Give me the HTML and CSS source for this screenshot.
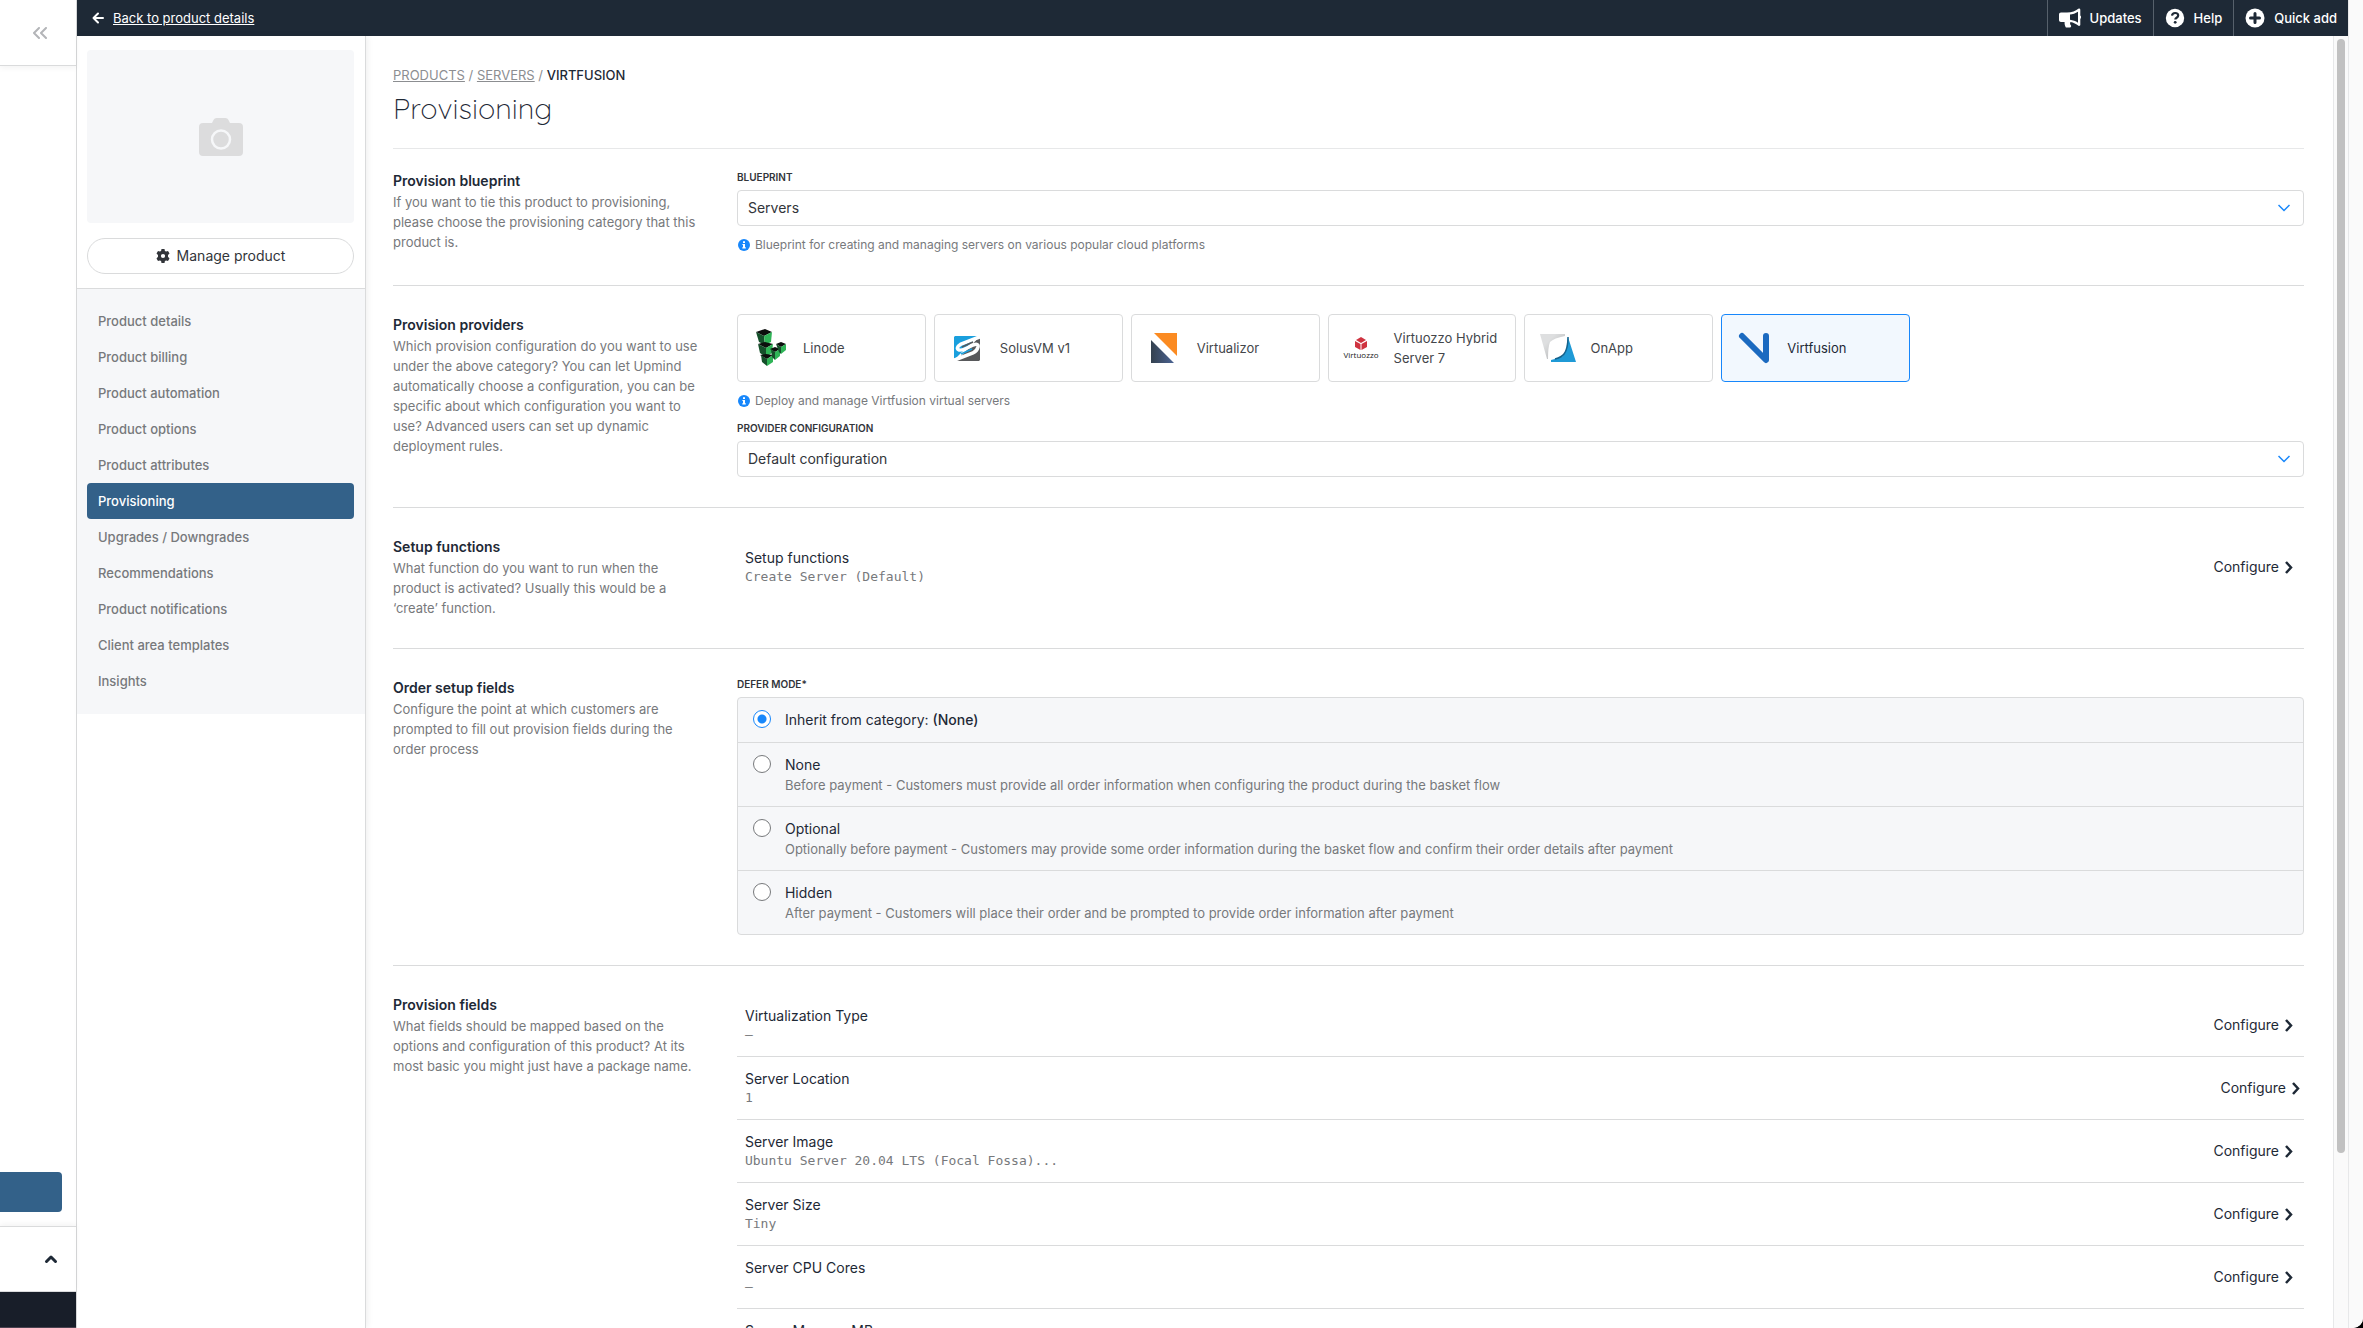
FILE: index.html
```html
<!DOCTYPE html>
<html lang="en">
<head>
<meta charset="utf-8">
<title>Provisioning</title>
<link rel="stylesheet" href="styles.css">
</head>
<body>
<div class="app">
  <aside class="rail">
    <div class="rail-head">
      <button class="icon-btn rail-collapse" aria-label="Collapse menu"><svg width="16" height="12" viewBox="0 0 16 12" fill="none" stroke="#b3b5b8" stroke-width="2" stroke-linecap="round" stroke-linejoin="round"><path d="M7 1 2 6l5 5M14 1 9 6l5 5"/></svg></button>
    </div>
    <div class="rail-cta"><button class="cta" aria-label="Primary action"></button></div>
    <div class="rail-toggle">
      <button class="icon-btn" aria-label="Expand"><svg width="14" height="10" viewBox="0 0 14 10" fill="none" stroke="#1e2936" stroke-width="3" stroke-linecap="round" stroke-linejoin="round"><path d="M2.500 7.500 7 3l4.500 4.500"/></svg></button>
    </div>
    <div class="rail-foot"></div>
  </aside>

  <div class="workspace">
    <header class="topbar">
      <a class="back" href="#"><svg width="12" height="12" viewBox="0 0 12 12" fill="none" stroke="#fff" stroke-width="2" stroke-linecap="round" stroke-linejoin="round"><path d="M11 6H1.500M6 1.500 1.500 6 6 10.500"/></svg><span>Back to product details</span></a>
      <nav class="top-actions">
        <button class="top-btn"><svg width="22" height="20" viewBox="0 0 22 20"><path fill="#fff" fill-rule="evenodd" d="M20 0.500c.9 0 1.300.6 1.300 1.300v5.700c1 .5 1 2.800 0 3.300v6c0 .9-.9 1.500-1.800 1-2.300-1.800-5-3.500-8-3.900-.7 1.400-.6 2.400.5 3.500.5.6-.2 1.900-1.300 2.100H6.900C5.700 17.500 5.500 15.700 5.600 14H2C.8 14 0 13.200 0 12V6.500C0 5.300.8 4.500 2 4.500h6c5 0 8.500-1.700 11.300-3.800ZM19 3.700C16.500 5.300 13.600 6.300 11 6.600v5.200c3 .4 5.600 1.400 8 2.900Z"/></svg>Updates</button>
        <button class="top-btn"><svg width="20" height="20" viewBox="0 0 20 20"><circle cx="10" cy="10" r="9.200" fill="#fff"/><path d="M7 7.700c.2-1.700 1.400-2.700 3.100-2.700 1.800 0 3.100 1 3.100 2.500 0 2.200-2.900 2.200-2.900 4" fill="none" stroke="#1e2936" stroke-width="2.200"/><circle cx="10.200" cy="14.300" r="1.400" fill="#1e2936"/></svg>Help</button>
        <button class="top-btn"><svg width="20" height="20" viewBox="0 0 20 20"><circle cx="10" cy="10" r="9.500" fill="#fff"/><path d="M10 5.500v9M5.500 10h9" stroke="#1e2936" stroke-width="3" stroke-linecap="round"/></svg>Quick add</button>
      </nav>
    </header>

    <div class="columns">
      <aside class="sidebar">
        <div class="product-card">
          <div class="thumb"><svg width="44" height="38" viewBox="0 0 44 38"><path fill="#dcdcdd" d="M4 5h9l1.500-3Q15.500 0 17.500 0h9q2 0 3 2L31 5h9q4 0 4 4v25q0 4-4 4H4q-4 0-4-4V9q0-4 4-4Z"/><circle cx="22" cy="21.500" r="9" fill="none" stroke="#f6f7f9" stroke-width="2.500"/></svg></div>
          <button class="manage"><svg width="14" height="14" viewBox="0 0 14 14"><path fill="#32353a" fill-rule="evenodd" d="M5.500 0h3l.4 1.900 1.200.7 1.900-.6 1.500 2.600L12 6.100v1.600l1.500 1.700-1.500 2.600-1.900-.6-1.200.7-.4 1.900h-3l-.4-1.900-1.200-.7-1.900.6L.5 9.400 2 7.700V6.100L.5 4.600 2 2l1.900.6 1.200-.7ZM7 4.900a2.100 2.100 0 1 0 0 4.200 2.100 2.100 0 0 0 0-4.200Z"/></svg>Manage product</button>
        </div>
        <nav class="menu">
          <a href="#">Product details</a>
          <a href="#">Product billing</a>
          <a href="#">Product automation</a>
          <a href="#">Product options</a>
          <a href="#">Product attributes</a>
          <a href="#" class="active" aria-current="page">Provisioning</a>
          <a href="#">Upgrades / Downgrades</a>
          <a href="#">Recommendations</a>
          <a href="#">Product notifications</a>
          <a href="#">Client area templates</a>
          <a href="#">Insights</a>
        </nav>
      </aside>

      <main class="content">
        <div class="page-head">
          <nav class="crumbs"><a href="#">PRODUCTS</a> / <a href="#">SERVERS</a> / <strong>VIRTFUSION</strong></nav>
          <h1>Provisioning</h1>
        </div>

        <section class="section first">
          <div class="intro">
            <h2>Provision blueprint</h2>
            <p>If you want to tie this product to provisioning, please choose the provisioning category that this product is.</p>
          </div>
          <div class="fields">
            <label class="field-label" for="blueprint">BLUEPRINT</label>
            <div class="select-wrap">
              <select id="blueprint"><option>Servers</option></select>
              <svg class="caret" width="12" height="8" viewBox="0 0 12 8" fill="none" stroke="#1787fb" stroke-width="1.500"><path d="m.5 1 5.500 5.500L11.500 1"/></svg>
            </div>
            <p class="hint"><svg width="12" height="12" viewBox="0 0 12 12"><circle cx="6" cy="6" r="6" fill="#1787fb"/><path fill="#fff" d="M5 2.200h2v1.700H5ZM4.400 4.900H7v3.300h.8v1.200H4.300V8.200H5V6h-.6Z"/></svg>Blueprint for creating and managing servers on various popular cloud platforms</p>
          </div>
        </section>

        <section class="section">
          <div class="intro">
            <h2>Provision providers</h2>
            <p>Which provision configuration do you want to use under the above category? You can let Upmind automatically choose a configuration, you can be specific about which configuration you want to use? Advanced users can set up dynamic deployment rules.</p>
          </div>
          <div class="fields">
            <div class="providers">
              <button class="provider"><svg class="logo" width="40" height="40" viewBox="0 0 40 40"><path fill="#0c0f0d" d="M6 4 15 1l7 3-8 4Z"/><path fill="#14502a" d="m6 4 8 4 1 9-6-3Z"/><path fill="#2fb457" d="m14 8 8-4-1 10-6 3Z"/><path fill="#0c0f0d" d="m8 16 7-2 8 2-7 4Z"/><path fill="#14502a" d="m8 16 8 4v9l-6-4Z"/><path fill="#2fb457" d="m16 20 7-4-1 9-6 4Z"/><path fill="#0c0f0d" d="m10 27 6-1 7 1-6 4Z"/><path fill="#14502a" d="m11 27 6 4v7l-5-4Z"/><path fill="#2fb457" d="m17 31 6-4v7l-6 4Z"/><path fill="#0c0f0d" d="m20 21 5-2 5 2-5 3Z"/><path fill="#14502a" d="m21 21 4 3v8l-3-3Z"/><path fill="#2fb457" d="m25 24 5-3v7l-5 4Z"/><path fill="#0c0f0d" d="m26 16 5-2 5 2-5 3Z"/><path fill="#14502a" d="m26 16 5 3v7l-2-2Z"/><path fill="#2fb457" d="m31 19 5-3v6l-5 4Z"/></svg>Linode</button>
              <button class="provider"><svg class="logo" width="40" height="40" viewBox="0 0 40 40"><path fill="#1a9fdd" d="M8 8h23L18 21 7 32V9Z"/><path fill="#58595b" d="M33 8v24l-1 1H9l12-12Z"/><path d="M35 8 14 16q-6 4-2 6 3 1 14-5 6-2 5 2-1 4-5 6L5 33" fill="none" stroke="#fff" stroke-width="3.500"/><path d="m15 19 11-5" stroke="#58595b" stroke-width="1.500"/><path d="m14 26 11-5" stroke="#1a9fdd" stroke-width="1.500"/></svg>SolusVM v1</button>
              <button class="provider"><svg class="logo" width="40" height="40" viewBox="0 0 40 40"><defs><linearGradient id="vz" x1="0" y1="0" x2="1" y2="0"><stop offset="0" stop-color="#34414f"/><stop offset="1" stop-color="#4c6494"/></linearGradient></defs><path fill="#fb8b22" d="M10 5h23v23Z"/><path fill="url(#vz)" d="M7 12v23h23Z"/></svg>Virtualizor</button>
              <button class="provider"><svg class="logo" width="40" height="40" viewBox="0 0 40 40"><path fill="#cf3340" d="m20 9 5 3-5 3-5-3Z"/><path fill="#cf3340" d="m14 13 5.500 3v6L14 19ZM26 13l-5.500 3v6l5.500-3Z"/><text x="20" y="30" text-anchor="middle" font-size="8" font-family="Open Sans" fill="#222">Virtuozzo</text></svg>Virtuozzo Hybrid Server 7</button>
              <button class="provider"><svg class="logo" width="40" height="40" viewBox="0 0 40 40"><defs><linearGradient id="oa" x1="0" y1="0" x2="1" y2="1"><stop offset="0.300" stop-color="#dedfe0"/><stop offset="1" stop-color="#a9abad"/></linearGradient></defs><path fill="url(#oa)" d="M3 6h25v2q-11 2-15 6-2 5-2 17h-1Z"/><path fill="#1f9ad6" d="m31 9 8 25H14v-2q8-2 12-4 4-5 5-19Z"/><path d="M31 9q0 12-4 17-2 3-9 5" fill="none" stroke="#14628c" stroke-width="1.500"/></svg>OnApp</button>
              <button class="provider selected" aria-pressed="true"><svg class="logo" width="40" height="40" viewBox="0 0 40 40"><path d="M8 8 32 32V8" fill="none" stroke="#1b6ac0" stroke-width="6" stroke-linecap="round" stroke-linejoin="round"/></svg>Virtfusion</button>
            </div>
            <p class="hint"><svg width="12" height="12" viewBox="0 0 12 12"><circle cx="6" cy="6" r="6" fill="#1787fb"/><path fill="#fff" d="M5 2.200h2v1.700H5ZM4.400 4.900H7v3.300h.8v1.200H4.300V8.200H5V6h-.6Z"/></svg>Deploy and manage Virtfusion virtual servers</p>
            <label class="field-label spaced" for="config">PROVIDER CONFIGURATION</label>
            <div class="select-wrap">
              <select id="config"><option>Default configuration</option></select>
              <svg class="caret" width="12" height="8" viewBox="0 0 12 8" fill="none" stroke="#1787fb" stroke-width="1.500"><path d="m.5 1 5.500 5.500L11.500 1"/></svg>
            </div>
          </div>
        </section>

        <section class="section">
          <div class="intro">
            <h2>Setup functions</h2>
            <p>What function do you want to run when the product is activated? Usually this would be a ‘create’ function.</p>
          </div>
          <div class="fields">
            <div class="row"><div><h3>Setup functions</h3><code>Create Server (Default)</code></div><button class="configure">Configure<svg width="8" height="13" viewBox="0 0 8 13" fill="none" stroke="#1e2936" stroke-width="2.500"><path d="m1 1 5 5.500L1 12"/></svg></button></div>
          </div>
        </section>

        <section class="section">
          <div class="intro">
            <h2>Order setup fields</h2>
            <p>Configure the point at which customers are prompted to fill out provision fields during the order process</p>
          </div>
          <fieldset class="fields">
            <legend class="field-label">DEFER MODE*</legend>
            <div class="options">
              <label class="option"><input type="radio" name="defer" checked><span class="option-text"><span class="option-title">Inherit from category: <b>(None)</b></span></span></label>
              <label class="option"><input type="radio" name="defer"><span class="option-text"><span class="option-title">None</span><span class="option-note">Before payment - Customers must provide all order information when configuring the product during the basket flow</span></span></label>
              <label class="option"><input type="radio" name="defer"><span class="option-text"><span class="option-title">Optional</span><span class="option-note">Optionally before payment - Customers may provide some order information during the basket flow and confirm their order details after payment</span></span></label>
              <label class="option"><input type="radio" name="defer"><span class="option-text"><span class="option-title">Hidden</span><span class="option-note">After payment - Customers will place their order and be prompted to provide order information after payment</span></span></label>
            </div>
          </fieldset>
        </section>

        <section class="section">
          <div class="intro">
            <h2>Provision fields</h2>
            <p>What fields should be mapped based on the options and configuration of this product? At its most basic you might just have a package name.</p>
          </div>
          <div class="fields">
            <div class="row"><div><h3>Virtualization Type</h3><code>–</code></div><button class="configure">Configure<svg width="8" height="13" viewBox="0 0 8 13" fill="none" stroke="#1e2936" stroke-width="2.500"><path d="m1 1 5 5.500L1 12"/></svg></button></div>
            <div class="row flush"><div><h3>Server Location</h3><code>1</code></div><button class="configure">Configure<svg width="8" height="13" viewBox="0 0 8 13" fill="none" stroke="#1e2936" stroke-width="2.500"><path d="m1 1 5 5.500L1 12"/></svg></button></div>
            <div class="row"><div><h3>Server Image</h3><code>Ubuntu Server 20.04 LTS (Focal Fossa)...</code></div><button class="configure">Configure<svg width="8" height="13" viewBox="0 0 8 13" fill="none" stroke="#1e2936" stroke-width="2.500"><path d="m1 1 5 5.500L1 12"/></svg></button></div>
            <div class="row"><div><h3>Server Size</h3><code>Tiny</code></div><button class="configure">Configure<svg width="8" height="13" viewBox="0 0 8 13" fill="none" stroke="#1e2936" stroke-width="2.500"><path d="m1 1 5 5.500L1 12"/></svg></button></div>
            <div class="row"><div><h3>Server CPU Cores</h3><code>–</code></div><button class="configure">Configure<svg width="8" height="13" viewBox="0 0 8 13" fill="none" stroke="#1e2936" stroke-width="2.500"><path d="m1 1 5 5.500L1 12"/></svg></button></div>
            <div class="row"><div><h3>Server Memory MB</h3></div></div>
          </div>
        </section>
      </main>
      <div class="scrollbar"><div class="thumb-bar"></div></div>
    </div>
  </div>
  <div class="gutter"></div>
</div>
</body>
</html>
```

FILE: styles.css
```css
* { box-sizing: border-box; }
html { background: #000; }
body { margin: 0; font: 14px/20px Inter, "Liberation Sans", sans-serif; color: #1e2936; }
h1, h2, h3, p { margin: 0; font-weight: 400; }
button { font: inherit; color: inherit; background: none; border: 0; padding: 0; cursor: pointer; }
svg { display: block; flex: none; }

.app { display: flex; height: 100vh; overflow: hidden; background: #fff; border-bottom-right-radius: 10px; }

/* Collapsed navigation rail */
.rail { display: flex; flex-direction: column; width: 77px; flex: none; border-right: 1px solid #dadbdc; }
.rail-head { display: flex; align-items: center; justify-content: flex-end; height: 66px; padding-right: 28px; border-bottom: 1px solid #dadbdc; box-shadow: 0 2px 6px rgba(0, 0, 0, .05); }
.rail-cta { margin-top: auto; padding: 0 14px 14px 0; }
.cta { display: block; width: 100%; height: 40px; background: #336189; border-radius: 0 4px 4px 0; }
.rail-toggle { display: flex; align-items: center; justify-content: flex-end; height: 66px; padding-right: 18px; border-top: 1px solid #dadbdc; border-bottom: 1px solid #dadbdc; box-shadow: 0 -2px 6px rgba(0, 0, 0, .05); }
.rail-foot { height: 36px; background: #181e29; border-bottom: 1px solid #4a4250; }

.workspace { display: flex; flex-direction: column; flex: 1; min-width: 0; }

/* Top bar */
.topbar { display: flex; justify-content: space-between; height: 36px; flex: none; background: #1e2936; color: #fff; font-weight: 500; font-size: 13px; }
.back { display: flex; align-items: center; gap: 9px; padding-left: 15px; color: #fff; font-weight: 400; }
.top-actions { display: flex; }
.top-btn { display: flex; align-items: center; gap: 9px; padding: 0 11px; border-left: 1px solid #56606b; }

.columns { display: flex; flex: 1; min-height: 0; }

/* Product sidebar */
.sidebar { width: 289px; flex: none; border-right: 1px solid #dadbdc; box-shadow: 2px 0 6px rgba(0, 0, 0, .06); }
.product-card { padding: 14px 11px 14px 10px; border-bottom: 1px solid #dadbdc; }
.thumb { display: flex; align-items: center; justify-content: center; height: 173px; background: #f6f7f9; border-radius: 4px; }
.manage { display: flex; align-items: center; justify-content: center; gap: 7px; width: 100%; height: 36px; margin-top: 15px; border: 1px solid #dadbdc; border-radius: 18px; color: #32353a; }
.menu { padding: 14px 11px 15px 10px; background: #f6f7f9; }
.menu a { display: block; padding: 8px 11px; border-radius: 4px; color: #77797c; font-size: 13px; font-weight: 500; text-decoration: none; }
.menu .active { background: #336189; color: #fff; }

/* Main column */
.content { flex: 1; min-width: 0; padding: 0 29px 0 27px; overflow: hidden; }
.page-head { padding: 29px 0 22px; border-bottom: 1px solid #e7e8e9; }
.crumbs { font-size: 13px; color: #8c8e91; }
.crumbs a { color: inherit; }
.crumbs strong { color: #1e2936; font-weight: 500; }
h1 { margin-top: 5px; font: 400 29px/36px Quicksand, Inter, sans-serif; font-weight: 300; }

.section { display: flex; padding: 28px 0 30px; border-bottom: 1px solid #dadbdc; }
.section.first { padding-top: 21px; }
.section:last-child { border-bottom: 0; }
.intro { width: 18%; flex: none; padding-right: 30px; }
.intro h2 { font-size: 14px; font-weight: 600; line-height: 22px; }
.intro p { color: #77797c; font-size: 13px; }
.fields { flex: 1; min-width: 0; margin: 0; border: 0; padding: 0; }
.field-label { display: block; padding: 0 0 6px; font-size: 10px; font-weight: 600; line-height: 14px; color: #32353a; }
.spaced { margin-top: 10px; }

.select-wrap { display: grid; align-items: center; }
.select-wrap > * { grid-area: 1 / 1; }
select { appearance: none; width: 100%; height: 36px; padding: 0 10px; border: 1px solid #dadbdc; border-radius: 4px; background: #fff; color: #32353a; font: inherit; }
.caret { justify-self: end; margin-right: 14px; pointer-events: none; }
.hint { display: flex; align-items: center; gap: 5px; margin-top: 9px; padding-left: 1px; font-size: 12px; color: #77797c; }

.providers { display: grid; grid-template-columns: repeat(8, 1fr); gap: 8px; }
.provider { display: flex; align-items: center; gap: 13px; height: 68px; padding: 0 12px; border: 1px solid #dadbdc; border-radius: 4px; color: #43464a; font-size: 13px; text-align: left; }
.selected { background: #f2f8fe; border-color: #1787fb; color: #1e2936; }

.row { display: flex; align-items: center; justify-content: space-between; padding: 12px 11px 12px 8px; border-bottom: 1px solid #dadbdc; }
.row:last-child { border-bottom: 0; padding-bottom: 0; }
.flush { padding-right: 4px; }
.row h3 { font-size: 14px; }
.row code { display: block; font: 13px/18px "DejaVu Sans Mono", monospace; color: #77797c; }
.configure { display: flex; align-items: center; gap: 6px; }

.options { border: 1px solid #dadbdc; border-radius: 4px; background: #f6f7f9; }
.option { display: flex; gap: 14px; padding: 12px 15px 11px; border-top: 1px solid #dadbdc; }
.option:first-child { border-top: 0; padding-bottom: 12px; }
.option b { font-weight: 500; }
.option-text, .option-text > span { display: block; }
.option-note { font-size: 13px; color: #77797c; }
input[type="radio"] { appearance: none; width: 18px; height: 18px; flex: none; margin: 0; border: 1px solid #77797c; border-radius: 50%; background: #fff; }
input[type="radio"]:checked { border-color: #1787fb; background: radial-gradient(circle, #1787fb 4px, #fff 5px); }

/* Scroll track */
.scrollbar { width: 15px; flex: none; padding: 3px 3px 0; background: #fafafa; border-left: 1px solid #e7e8e9; }
.thumb-bar { height: 86.4%; border-radius: 4px; background: #c1c1c1; }
.gutter { width: 15px; flex: none; background: #fafafa; border-left: 1px solid #e7e8e9; }
```
